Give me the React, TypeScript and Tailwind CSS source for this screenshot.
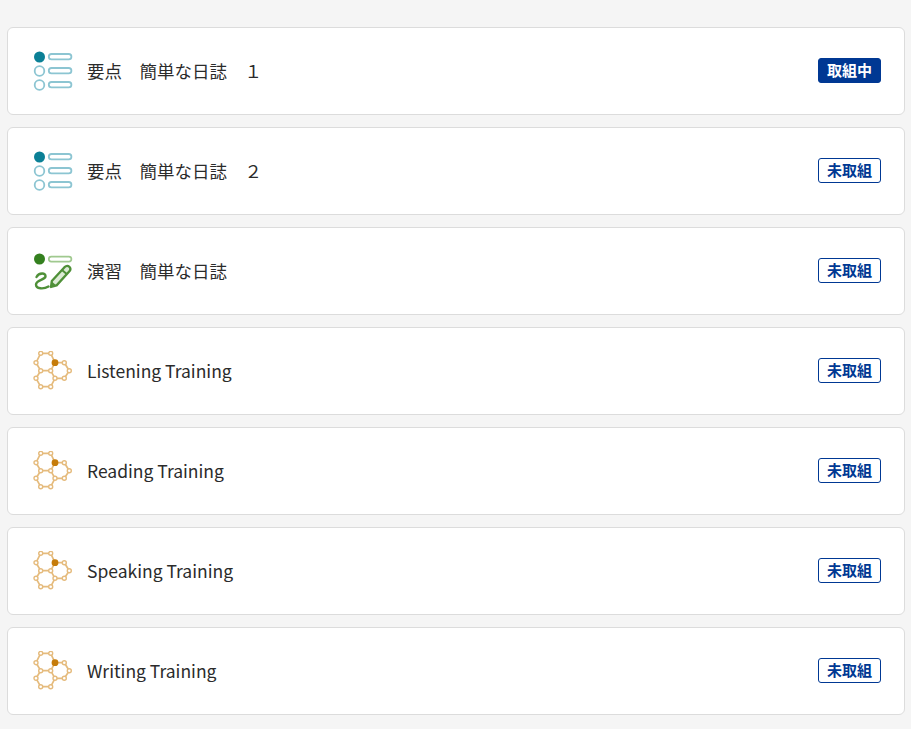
const font = { fontFamily: '"Noto Sans CJK JP", "Noto Sans", sans-serif' };

function ListIcon() {
  const c = "#8cc5d2";
  return (
    <svg width="40" height="40" viewBox="0 0 40 40" fill="none">
      <circle cx="6.5" cy="6" r="5.5" fill="#0b8096" />
      <circle cx="6.5" cy="20" r="4.8" stroke={c} strokeWidth="1.8" />
      <circle cx="6.5" cy="34" r="4.8" stroke={c} strokeWidth="1.8" />
      <rect x="15.8" y="3" width="22.6" height="5.4" rx="2.7" stroke={c} strokeWidth="1.8" />
      <rect x="15.8" y="17" width="22.6" height="5.4" rx="2.7" stroke={c} strokeWidth="1.8" />
      <rect x="15.8" y="31" width="22.6" height="5.4" rx="2.7" stroke={c} strokeWidth="1.8" />
    </svg>
  );
}

function PracticeIcon() {
  const g = "#4f9038";
  return (
    <svg width="40" height="40" viewBox="0 0 40 40" fill="none">
      <circle cx="6.5" cy="8" r="5.5" fill="#34801f" />
      <rect x="15.8" y="5.6" width="22.6" height="5" rx="2.5" stroke="#a0c98f" strokeWidth="1.7" />
      <path d="M3.5 26 C6 21.5 13 21.5 12.5 25.5 C12 29 3 29 3 33.5 C3 38 10.5 38.5 15.5 35.5" stroke={g} strokeWidth="2.4" strokeLinecap="round" />
      <path d="M18 36 L18.8 30 L31.5 16.2 C33 14.8 35 14.6 36.4 15.8 C37.8 17.2 37.6 19 36.2 20.6 L23.6 34.4 Z" stroke={g} strokeWidth="2.3" strokeLinejoin="round" fill="#dcebd5" />
      <path d="M18 36 L18.8 30.5 L23.4 34.6 Z" fill={g} />
      <path d="M29 19 L34 23.2" stroke={g} strokeWidth="2" />
    </svg>
  );
}

function NetworkIcon() {
  const s = "#e5bb7d";
  const nodes: [number, number][] = [
    [7.7, 2.3], [17.7, 2.3], [17.7, 19.7], [7.7, 19.7], [3, 11.7],
    [31.3, 11.7], [36.3, 19.7], [31.3, 27.3], [22, 27.3],
    [17.7, 35.7], [7.7, 35.7], [3, 27.3],
  ];
  return (
    <svg width="40" height="40" viewBox="0 0 40 40" fill="none">
      <path
        d="M7.7 2.3 L17.7 2.3 L22 11.7 L17.7 19.7 L7.7 19.7 L3 11.7 Z M22 11.7 L31.3 11.7 L36.3 19.7 L31.3 27.3 L22 27.3 L17.7 19.7 M7.7 19.7 L3 27.3 L7.7 35.7 L17.7 35.7 L22 27.3"
        stroke={s}
        strokeWidth="1.7"
      />
      {nodes.map(([x, y], i) => (
        <circle key={i} cx={x} cy={y} r="2" fill="#fff" stroke={s} strokeWidth="1.4" />
      ))}
      <circle cx="22" cy="11.7" r="3.4" fill="#c67c0a" />
    </svg>
  );
}

type Row = { title: string; icon: "list" | "practice" | "network"; active?: boolean };

const rows: Row[] = [
  { title: "要点　簡単な日誌　１", icon: "list", active: true },
  { title: "要点　簡単な日誌　２", icon: "list" },
  { title: "演習　簡単な日誌", icon: "practice" },
  { title: "Listening Training", icon: "network" },
  { title: "Reading Training", icon: "network" },
  { title: "Speaking Training", icon: "network" },
  { title: "Writing Training", icon: "network" },
];

export default function App() {
  return (
    <div className="min-h-[729px] bg-[#f5f5f5] pt-[27px] pl-[7px] pr-[6px] flex flex-col gap-3" style={font}>
      {rows.map((r) => (
        <div
          key={r.title}
          className="h-[88px] bg-white border border-[#dcdcdc] rounded-md flex items-center pl-[25px] pr-[23px]"
        >
          <div className="w-[40px] h-[40px] shrink-0">
            {r.icon === "list" ? <ListIcon /> : r.icon === "practice" ? <PracticeIcon /> : <NetworkIcon />}
          </div>
          <div className="ml-[14px] flex-1 text-[17.5px] text-[#2b2b2b] leading-none">{r.title}</div>
          {r.active ? (
            <span className="w-[63px] h-[25px] mb-[1px] rounded-[3px] bg-[#003893] border border-[#003893] text-white text-[15px] font-bold flex items-center justify-center">
              取組中
            </span>
          ) : (
            <span className="w-[63px] h-[25px] mb-[1px] rounded-[3px] bg-white border border-[#003893] text-[#003893] text-[15px] font-bold flex items-center justify-center">
              未取組
            </span>
          )}
        </div>
      ))}
    </div>
  );
}
